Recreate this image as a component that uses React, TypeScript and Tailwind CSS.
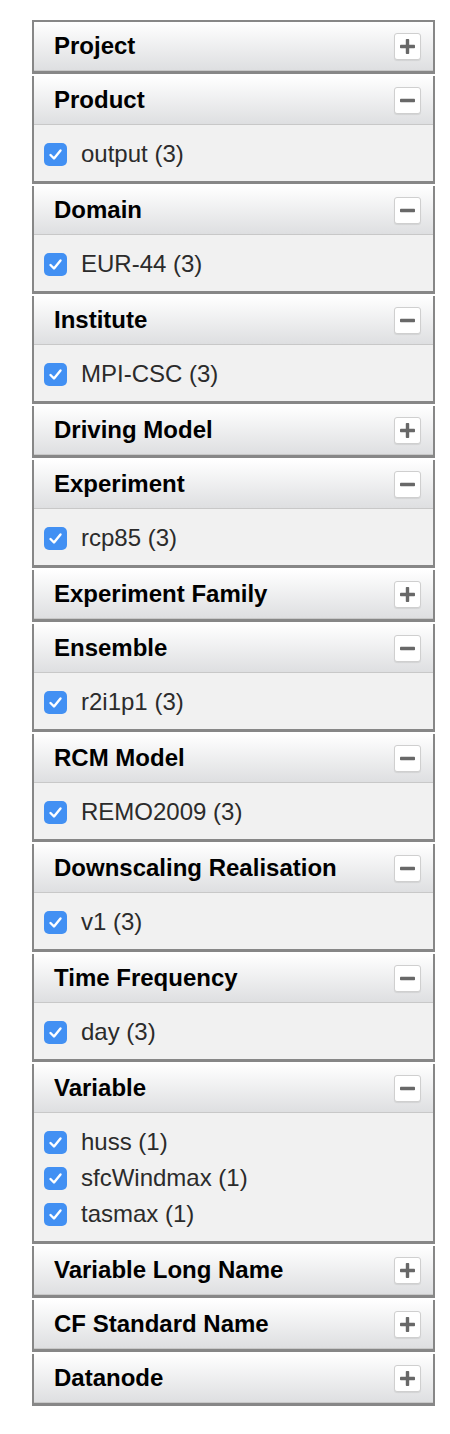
import React from 'react';

interface Facet {
  title: string;
  open: boolean;
  items: string[];
}

const facets: Facet[] = [
  { title: 'Project', open: false, items: [] },
  { title: 'Product', open: true, items: ['output (3)'] },
  { title: 'Domain', open: true, items: ['EUR-44 (3)'] },
  { title: 'Institute', open: true, items: ['MPI-CSC (3)'] },
  { title: 'Driving Model', open: false, items: [] },
  { title: 'Experiment', open: true, items: ['rcp85 (3)'] },
  { title: 'Experiment Family', open: false, items: [] },
  { title: 'Ensemble', open: true, items: ['r2i1p1 (3)'] },
  { title: 'RCM Model', open: true, items: ['REMO2009 (3)'] },
  { title: 'Downscaling Realisation', open: true, items: ['v1 (3)'] },
  { title: 'Time Frequency', open: true, items: ['day (3)'] },
  { title: 'Variable', open: true, items: ['huss (1)', 'sfcWindmax (1)', 'tasmax (1)'] },
  { title: 'Variable Long Name', open: false, items: [] },
  { title: 'CF Standard Name', open: false, items: [] },
  { title: 'Datanode', open: false, items: [] },
];

function ToggleButton({ open }: { open: boolean }) {
  return (
    <div className="w-[27px] h-[27px] mr-[12px] bg-white border border-[#cfcfcf] rounded-[3px] shadow-[0_1px_1px_rgba(0,0,0,0.08)] flex items-center justify-center">
      <svg width="17" height="17" viewBox="0 0 17 17">
        <rect x="1" y="6.8" width="15" height="3.4" rx="0.8" fill="#686868" />
        {!open && <rect x="6.8" y="1" width="3.4" height="15" rx="0.8" fill="#686868" />}
      </svg>
    </div>
  );
}

function Checkbox() {
  return (
    <div className="w-[23px] h-[23px] rounded-[5px] bg-[#4290f3] flex items-center justify-center shrink-0">
      <svg width="15" height="15" viewBox="0 0 15 15">
        <path d="M2.5 8 L6 11.5 L12.5 3.5" fill="none" stroke="white" strokeWidth="2.4" strokeLinecap="round" strokeLinejoin="round" />
      </svg>
    </div>
  );
}

export default function App() {
  return (
    <div className="w-[450px] min-h-[1434px] bg-white pt-[20px]" style={{ fontFamily: '"Liberation Sans", Arial, Helvetica, sans-serif' }}>
      {facets.map((f, i) => (
        <div
          key={f.title}
          className={`ml-[32px] w-[403px] mb-[2px] border-x-2 border-b-[3px] border-[#878787] ${i === 0 ? 'border-t-2' : ''}`}
        >
          <div className="h-[49px] flex items-center justify-between pl-[20px] border-b border-[#c8c8c8] bg-gradient-to-b from-white to-[#dedfe1]">
            <span className="text-[24px] font-bold text-black leading-none">{f.title}</span>
            <ToggleButton open={f.open} />
          </div>
          {f.open && (
            <div className="bg-[#f1f1f1] pt-[11px] pb-[9px]">
              {f.items.map((it) => (
                <div key={it} className="h-9 flex items-center pl-[10px]">
                  <Checkbox />
                  <span className="ml-[14px] text-[24px] text-[#2b2b2b] leading-none">{it}</span>
                </div>
              ))}
            </div>
          )}
        </div>
      ))}
    </div>
  );
}
